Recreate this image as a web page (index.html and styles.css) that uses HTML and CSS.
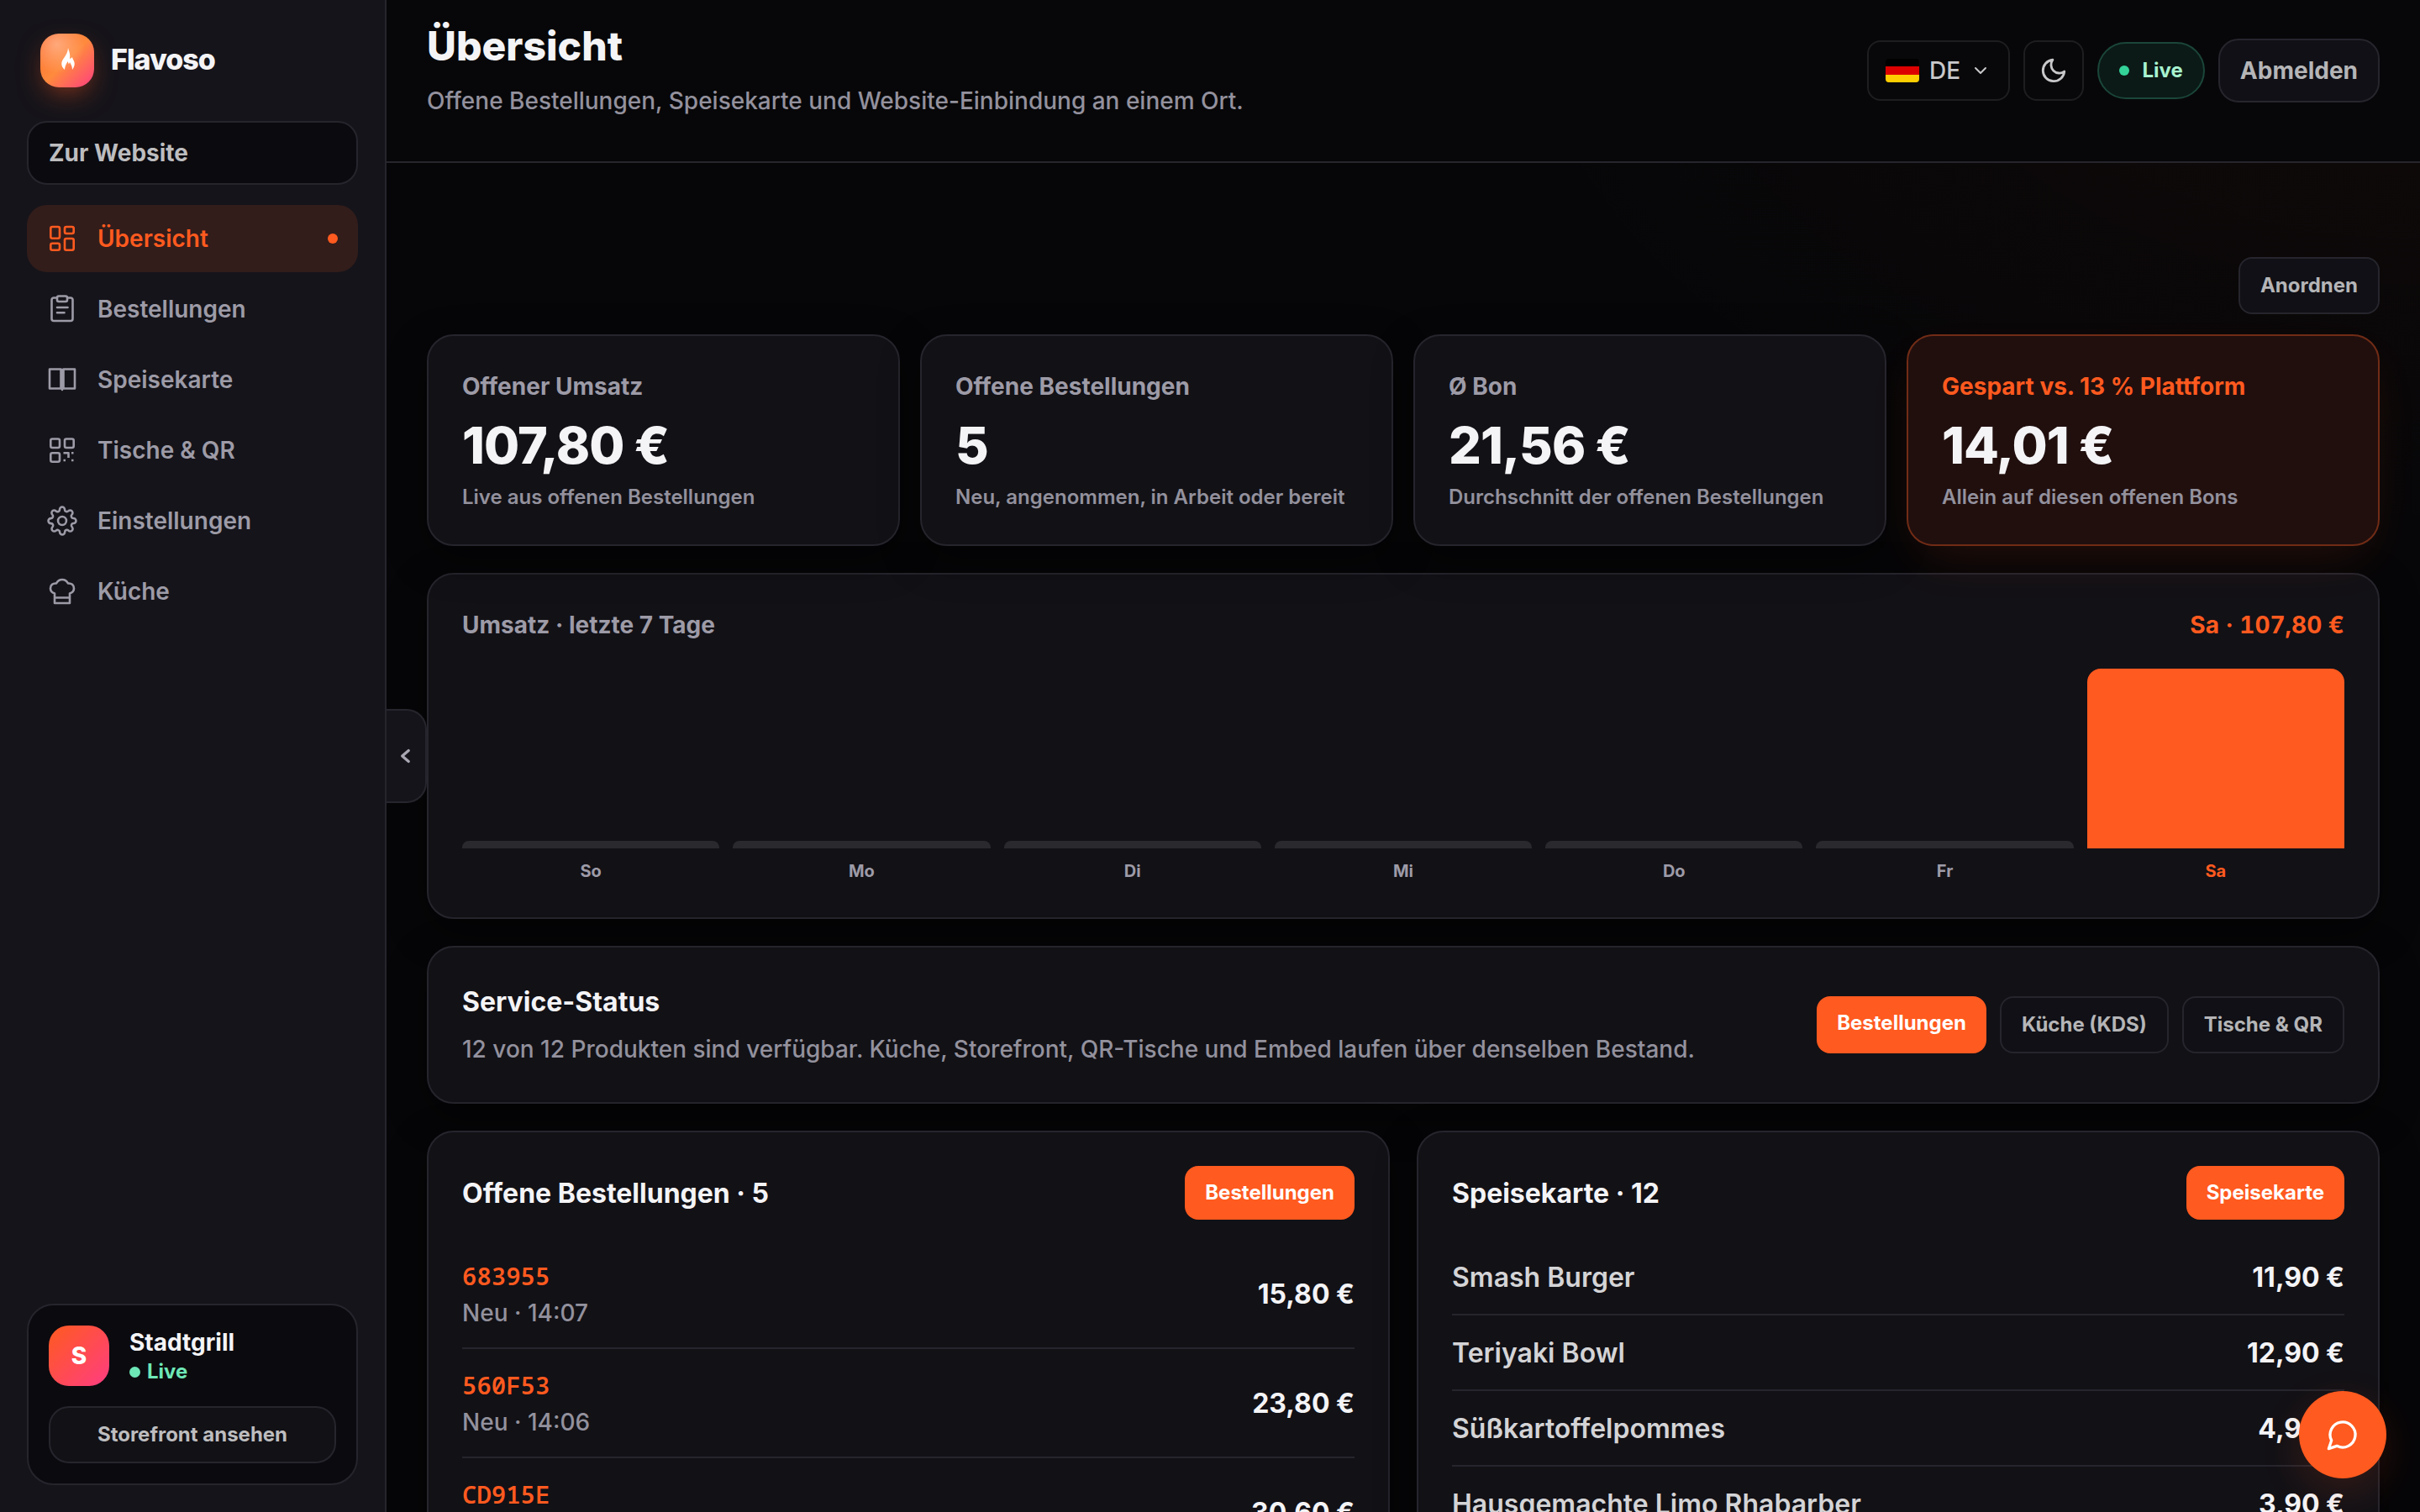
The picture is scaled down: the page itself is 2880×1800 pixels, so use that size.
FILE: index.html
```html
<!DOCTYPE html>
<html lang="de">
<head>
<meta charset="utf-8">
<meta name="viewport" content="width=device-width, initial-scale=1">
<title>Flavoso – Übersicht</title>
<link rel="stylesheet" href="styles.css">
</head>
<body>
<div class="app">
  <aside class="sidebar">
    <div class="brand">
      <span class="brand-mark">
        <svg viewBox="0 0 64 64" aria-hidden="true"><path fill="#fff" d="M33 17C34 21 36 24 35 30 36.500 29.500 37.500 28.500 38 28 38.500 31 41 33 40.700 36.500 40.500 39.500 39 41.500 38 43 38 39 36.500 36.500 35 34L34 36.500 32.500 33C32 35 29.500 37 29 43 26.500 41 25 38 25.300 35 25.800 30 32.500 26 33 17z"/></svg>
      </span>
      <span class="brand-name">Flavoso</span>
    </div>
    <a class="site-link" href="#">Zur Website</a>
    <nav class="nav">
      <a class="nav-item active" href="#">
        <svg viewBox="0 0 36 36" stroke-width="2.6" aria-hidden="true"><rect x="4.300" y="4" width="10.700" height="13.700" rx="2"/><rect x="21" y="4" width="10.700" height="8" rx="2"/><rect x="21" y="18" width="10.700" height="13.700" rx="2"/><rect x="4.300" y="23.700" width="10.700" height="8" rx="2"/></svg>
        <span>Übersicht</span><i class="nav-dot"></i>
      </a>
      <a class="nav-item" href="#">
        <svg viewBox="0 0 36 36" stroke-width="2.6" aria-hidden="true"><path d="M11 4.500H8a2.500 2.500 0 0 0-2.500 2.500v22.500A2.500 2.500 0 0 0 8 32h20a2.500 2.500 0 0 0 2.500-2.500V7A2.500 2.500 0 0 0 28 4.500h-3"/><rect x="12" y="2.500" width="12" height="6.500" rx="2"/><path d="M12 16h12.500M12 22.300h8.500"/></svg>
        <span>Bestellungen</span>
      </a>
      <a class="nav-item" href="#">
        <svg viewBox="0 0 36 36" stroke-width="2.6" aria-hidden="true"><path d="M3 5.500h13.500v23H3zM19.500 5.500H33v23H19.500zM18 6.500v23.500"/></svg>
        <span>Speisekarte</span>
      </a>
      <a class="nav-item" href="#">
        <svg viewBox="0 0 36 36" stroke-width="2.6" aria-hidden="true"><rect x="4.300" y="4.500" width="10.700" height="10.500" rx="2"/><rect x="21" y="4.500" width="10.700" height="10.500" rx="2"/><rect x="4.300" y="21.300" width="10.700" height="10.500" rx="2"/><path stroke-linecap="butt" d="M19.500 21.300H25.500V27M29 21.300h2.500M19.500 30h2.500M29 30h2.500"/></svg>
        <span>Tische &amp; QR</span>
      </a>
      <a class="nav-item" href="#">
        <svg viewBox="0 0 24 24" stroke-width="1.7" aria-hidden="true"><circle cx="12" cy="12" r="3.300"/><path d="M19.400 15a1.650 1.650 0 0 0 .33 1.820l.06.06a2 2 0 0 1 0 2.830 2 2 0 0 1-2.830 0l-.06-.06a1.650 1.650 0 0 0-1.820-.33 1.650 1.650 0 0 0-1 1.510V21a2 2 0 0 1-2 2 2 2 0 0 1-2-2v-.09A1.650 1.650 0 0 0 9 19.400a1.650 1.650 0 0 0-1.820.33l-.06.06a2 2 0 0 1-2.830 0 2 2 0 0 1 0-2.830l.06-.06a1.650 1.650 0 0 0 .33-1.820 1.650 1.650 0 0 0-1.510-1H3a2 2 0 0 1-2-2 2 2 0 0 1 2-2h.09A1.650 1.650 0 0 0 4.600 9a1.650 1.650 0 0 0-.33-1.820l-.06-.06a2 2 0 0 1 0-2.830 2 2 0 0 1 2.830 0l.06.06a1.650 1.650 0 0 0 1.820.33H9a1.650 1.650 0 0 0 1-1.510V3a2 2 0 0 1 2-2 2 2 0 0 1 2 2v.09a1.650 1.650 0 0 0 1 1.510 1.650 1.650 0 0 0 1.820-.33l.06-.06a2 2 0 0 1 2.830 0 2 2 0 0 1 0 2.830l-.06.06a1.650 1.650 0 0 0-.33 1.820V9a1.650 1.650 0 0 0 1.510 1H21a2 2 0 0 1 2 2 2 2 0 0 1-2 2h-.09a1.650 1.650 0 0 0-1.510 1z"/></svg>
        <span>Einstellungen</span>
      </a>
      <a class="nav-item" href="#">
        <svg viewBox="0 0 36 36" stroke-width="2.6" aria-hidden="true"><path d="M9 20.500C6 19.500 4 17.500 4 14.500c0-4 3-6.500 7-6C12.500 5.500 15 4 18 4s5.500 1.500 7 4.500c4-.5 7 2 7 6 0 3-2 5-5 6V32H9zM9 25.500h18"/></svg>
        <span>Küche</span>
      </a>
    </nav>
    <section class="shop">
      <div class="shop-head">
        <span class="avatar">S</span>
        <div>
          <div class="shop-name">Stadtgrill</div>
          <div class="shop-live"><i></i>Live</div>
        </div>
      </div>
      <a class="shop-link" href="#">Storefront ansehen</a>
    </section>
    <button class="collapse" type="button" aria-label="Seitenleiste einklappen">
      <svg viewBox="0 0 24 24" stroke-width="3" aria-hidden="true"><path d="M15 6l-7 6 7 6"/></svg>
    </button>
  </aside>

  <div class="main">
    <header class="topbar">
      <div>
        <h1>Übersicht</h1>
        <p class="lead">Offene Bestellungen, Speisekarte und Website-Einbindung an einem Ort.</p>
      </div>
      <div class="tools">
        <button class="tool lang" type="button">
          <svg class="flag" viewBox="0 0 40 28" aria-hidden="true"><path fill="#000" d="M0 0h40v10H0z"/><path fill="#d00" d="M0 9h40v10H0z"/><path fill="#ffce00" d="M0 19h40v9H0z"/></svg>
          DE
          <svg class="chev" viewBox="0 0 24 24" stroke-width="2" aria-hidden="true"><path d="M6 9l6 6 6-6"/></svg>
        </button>
        <button class="tool theme" type="button" aria-label="Dunkles Design">
          <svg viewBox="0 0 24 24" stroke-width="2" aria-hidden="true"><path d="M21 12.790A9 9 0 1 1 11.210 3 7 7 0 0 0 21 12.790z"/></svg>
        </button>
        <span class="live"><i></i>Live</span>
        <button class="btn logout" type="button">Abmelden</button>
      </div>
    </header>

    <main class="content">
      <div class="arrange"><button class="btn small" type="button">Anordnen</button></div>

      <section class="stats">
        <article class="card stat"><h2>Offener Umsatz</h2><strong>107,80 €</strong><p>Live aus offenen Bestellungen</p></article>
        <article class="card stat"><h2>Offene Bestellungen</h2><strong>5</strong><p>Neu, angenommen, in Arbeit oder bereit</p></article>
        <article class="card stat"><h2>Ø Bon</h2><strong>21,56 €</strong><p>Durchschnitt der offenen Bestellungen</p></article>
        <article class="card stat saved"><h2>Gespart vs. 13 % Plattform</h2><strong>14,01 €</strong><p>Allein auf diesen offenen Bons</p></article>
      </section>

      <section class="card chart">
        <div class="chart-head"><h2>Umsatz · letzte 7 Tage</h2><span>Sa · 107,80 €</span></div>
        <div class="bars">
          <div class="day"><i style="height:4%"></i><span>So</span></div>
          <div class="day"><i style="height:4%"></i><span>Mo</span></div>
          <div class="day"><i style="height:4%"></i><span>Di</span></div>
          <div class="day"><i style="height:4%"></i><span>Mi</span></div>
          <div class="day"><i style="height:4%"></i><span>Do</span></div>
          <div class="day"><i style="height:4%"></i><span>Fr</span></div>
          <div class="day today"><i style="height:100%"></i><span>Sa</span></div>
        </div>
      </section>

      <section class="card status">
        <div>
          <h3>Service-Status</h3>
          <p class="lead">12 von 12 Produkten sind verfügbar. Küche, Storefront, QR-Tische und Embed laufen über denselben Bestand.</p>
        </div>
        <div class="actions">
          <a class="btn small primary" href="#">Bestellungen</a>
          <a class="btn small" href="#">Küche (KDS)</a>
          <a class="btn small" href="#">Tische &amp; QR</a>
        </div>
      </section>

      <div class="lists">
        <section class="card list">
          <div class="list-head"><h3>Offene Bestellungen · 5</h3><a class="btn small primary" href="#">Bestellungen</a></div>
          <ul>
            <li class="order"><div><code>683955</code><span>Neu · 14:07</span></div><b>15,80 €</b></li>
            <li class="order"><div><code>560F53</code><span>Neu · 14:06</span></div><b>23,80 €</b></li>
            <li class="order"><div><code>CD915E</code><span>Neu · 14:05</span></div><b>30,60 €</b></li>
          </ul>
        </section>
        <section class="card list">
          <div class="list-head"><h3>Speisekarte · 12</h3><a class="btn small primary" href="#">Speisekarte</a></div>
          <ul>
            <li class="dish"><span>Smash Burger</span><b>11,90 €</b></li>
            <li class="dish"><span>Teriyaki Bowl</span><b>12,90 €</b></li>
            <li class="dish"><span>Süßkartoffelpommes</span><b>4,90 €</b></li>
            <li class="dish"><span>Hausgemachte Limo Rhabarber</span><b>3,90 €</b></li>
          </ul>
        </section>
      </div>
    </main>
  </div>
  <button class="chat" type="button" aria-label="Chat öffnen">
    <svg viewBox="0 0 24 24" stroke-width="2" aria-hidden="true"><path d="M7.900 20A9 9 0 1 0 4 16.100L2 22z"/></svg>
  </button>
</div>
</body>
</html>
```

FILE: styles.css
```css
:root {
  --bg: #060608;
  --side: #15141a;
  --card: #121116;
  --line: #26252d;
  --text: #f4f4f6;
  --soft: #bdbdbf;
  --muted: #93919d;
  --accent: #ff5a1f;
}
* { box-sizing: border-box; }
body {
  margin: 0;
  background: var(--bg);
  color: var(--text);
  font: 500 28px/42px Inter, sans-serif;
}
h1, h2, h3, p, ul { margin: 0; padding: 0; }
a { color: inherit; text-decoration: none; }
button { font: inherit; color: inherit; cursor: pointer; }
svg { display: block; flex: none; fill: none; stroke: currentColor; stroke-linecap: round; stroke-linejoin: round; }

.app { display: flex; height: 100vh; }

/* Sidebar */
.sidebar {
  position: relative;
  z-index: 2;
  flex: none;
  width: 460px;
  padding: 40px 32px 32px;
  display: flex;
  flex-direction: column;
  background: var(--side);
  border-right: 2px solid var(--line);
}
.brand { display: flex; align-items: center; gap: 20px; padding: 0 16px; }
.brand-mark {
  width: 64px;
  height: 64px;
  border-radius: 22px;
  background: radial-gradient(circle at 30% 20%, #ffffff59, transparent 50%), linear-gradient(135deg, #ff6b2c, #ff8a3d 50%, #ff3d81);
  box-shadow: 0 12px 32px -8px #ff5a1f8c;
}
.brand-mark svg { stroke: none; }
.brand-name { font-size: 34px; line-height: 40px; padding-bottom: 2px; font-weight: 800; letter-spacing: -1px; }
.site-link {
  margin-top: 40px;
  padding: 15px 24px;
  border: 2px solid var(--line);
  border-radius: 24px;
  background: #0b0a0f;
  color: var(--soft);
  font-weight: 700;
}
.nav { margin-top: 24px; display: grid; gap: 4px; }
.nav-item {
  display: flex;
  align-items: center;
  gap: 24px;
  height: 80px;
  padding: 0 24px;
  border-radius: 24px;
  color: #9d9ba7;
  font-weight: 600;
}
.nav-item svg { width: 36px; height: 36px; }
.nav-item span { flex: 1; }
.nav-item.active { background: #321d1b; color: var(--accent); }
.nav-dot { width: 12px; height: 12px; border-radius: 50%; background: var(--accent); }
.shop {
  margin-top: auto;
  padding: 24px;
  border: 2px solid var(--line);
  border-radius: 32px;
  background: #0b0a0f;
}
.shop-head { display: flex; align-items: center; gap: 24px; }
.avatar {
  width: 72px;
  height: 72px;
  border-radius: 24px;
  display: grid;
  place-items: center;
  background: linear-gradient(135deg, #ff5a1f, #ff3d81);
  color: #fff;
  font-weight: 800;
}
.shop-name { padding-top: 2px; font-weight: 700; line-height: 36px; }
.shop-live { display: flex; align-items: center; gap: 8px; color: #6ee7b7; font-size: 24px; font-weight: 700; line-height: 34px; }
.shop-live i { width: 13px; height: 13px; border-radius: 50%; background: currentColor; }
.shop-link {
  display: block;
  margin-top: 24px;
  padding: 14px;
  border: 2px solid var(--line);
  border-radius: 24px;
  background: var(--card);
  color: var(--soft);
  font-size: 24px;
  font-weight: 700;
  line-height: 36px;
  text-align: center;
}
.collapse {
  position: absolute;
  top: 50%;
  left: 100%;
  width: 48px;
  height: 112px;
  margin: -56px 0 0 2px;
  padding: 0;
  display: grid;
  place-items: center;
  border: 2px solid var(--line);
  border-left: 0;
  border-radius: 0 24px 24px 0;
  background: var(--side);
  color: #a9a7b2;
}
.collapse svg { width: 26px; height: 26px; }

/* Header */
.main {
  flex: 1;
  min-width: 0;
  overflow-y: auto;
  scrollbar-width: none;
  background: radial-gradient(ellipse 1100px 640px at 100% 0, #ff5a1f0c, transparent);
}
.topbar {
  height: 194px;
  padding: 25px 48px 53px;
  display: flex;
  justify-content: space-between;
  border-bottom: 2px solid var(--line);
  background: #070709;
}
h1 { font-size: 48px; line-height: 60px; font-weight: 800; }
.lead { color: var(--muted); }
.topbar .lead { margin-top: 14px; }
.tools { display: flex; align-items: center; gap: 16px; height: 118px; }
.tool {
  height: 72px;
  padding: 0;
  display: flex;
  align-items: center;
  justify-content: center;
  border: 2px solid #1e1e20;
  border-radius: 16px;
  background: #08080a;
  color: #c8c8ca;
}
.lang { width: 170px; gap: 12px; }
.theme { width: 72px; }
.flag { width: 40px; height: 28px; border-radius: 4px; stroke: none; }
.chev { width: 24px; height: 24px; }
.theme svg { width: 34px; height: 34px; }
.live {
  display: flex;
  align-items: center;
  gap: 16px;
  height: 68px;
  padding: 0 24px;
  border: 2px solid #1b4639;
  border-radius: 34px;
  background: #0b1a17;
  color: #a7f3d0;
  font-size: 24px;
  font-weight: 700;
}
.live i { width: 12px; height: 12px; border-radius: 50%; background: #34d399; }

.btn {
  display: block;
  border: 2px solid var(--line);
  background: #101016;
  color: #b5b5b7;
  font-weight: 700;
}
.logout { height: 76px; padding: 0 24px; border-radius: 24px; }
.small { height: 68px; padding: 0 24px; border-radius: 16px; font-size: 24px; line-height: 64px; }
.primary { border: 0; background: var(--accent); color: #fff; }

/* Content */
.content { padding: 112px 48px 48px; }
.arrange { display: flex; justify-content: flex-end; }
.card {
  border: 2px solid var(--line);
  border-radius: 32px;
  background: var(--card);
  box-shadow: 0 16px 48px #0006;
}
.stats { margin-top: 24px; display: grid; grid-template-columns: repeat(4, 1fr); gap: 24px; }
.stat { height: 252px; padding: 39px 40px; }
h2 { color: #9d9ba7; font-size: 28px; line-height: 42px; font-weight: 700; }
.stat strong { display: block; margin-top: 17px; font-size: 61px; line-height: 64px; font-weight: 800; letter-spacing: -1px; }
.stat p { margin-top: 12px; color: var(--muted); font-size: 24px; line-height: 36px; font-weight: 600; }
.saved { border-color: #712c16; background: #210f0e; box-shadow: 0 24px 60px -16px #ff5a1f24; }
.saved h2 { color: var(--accent); }

.chart { margin-top: 32px; padding: 39px 40px 36px; }
.chart-head { display: flex; justify-content: space-between; color: var(--accent); font-weight: 700; }
.chart-head span { font-variant-numeric: tabular-nums; }
.bars { margin-top: 31px; display: grid; grid-template-columns: repeat(7, 1fr); gap: 16px; }
.day { height: 260px; display: grid; grid-template-rows: 214px 30px; gap: 12px; text-align: center; color: #9d9ba7; font-size: 20px; line-height: 30px; font-weight: 700; }
.day i { align-self: end; min-height: 8px; border-radius: 8px 8px 0 0; background: #2a292e; }
.day.today { color: var(--accent); }
.day.today i { border-radius: 16px 16px 0 0; background: var(--accent); }

.status { margin-top: 32px; padding: 40px; display: flex; align-items: center; justify-content: space-between; }
h3 { font-size: 32px; line-height: 50px; font-weight: 700; }
.status .lead { margin-top: 8px; line-height: 46px; }
.actions { display: flex; gap: 16px; }

.lists { margin-top: 32px; display: grid; grid-template-columns: 1fr 1fr; gap: 32px; }
.list { padding: 40px; }
.list-head { display: flex; align-items: center; justify-content: space-between; }
.list-head h3 { padding-top: 2px; }
.list-head .btn { height: 64px; }
.list ul { margin-top: 24px; list-style: none; }
.list li { display: flex; align-items: center; justify-content: space-between; padding-top: 2px; border-bottom: 2px solid var(--line); }
.list b { font-size: 32px; font-weight: 700; }
.order { height: 130px; }
.order div { display: grid; gap: 2px; }
.order code { color: var(--accent); font: 600 29px/42px "Noto Sans Mono", "DejaVu Sans Mono", monospace; }
.order span { color: var(--muted); }
.dish { height: 90px; color: #d4d4d6; font-size: 32px; font-weight: 600; }
.dish b { color: var(--text); }

.chat {
  position: fixed;
  right: 40px;
  bottom: 40px;
  z-index: 3;
  width: 104px;
  height: 104px;
  padding: 0;
  display: grid;
  place-items: center;
  border: 0;
  border-radius: 50%;
  background: var(--accent);
  color: #fff;
  box-shadow: 0 16px 48px #ff5a1f26;
}
.chat svg { width: 40px; height: 40px; }
```
